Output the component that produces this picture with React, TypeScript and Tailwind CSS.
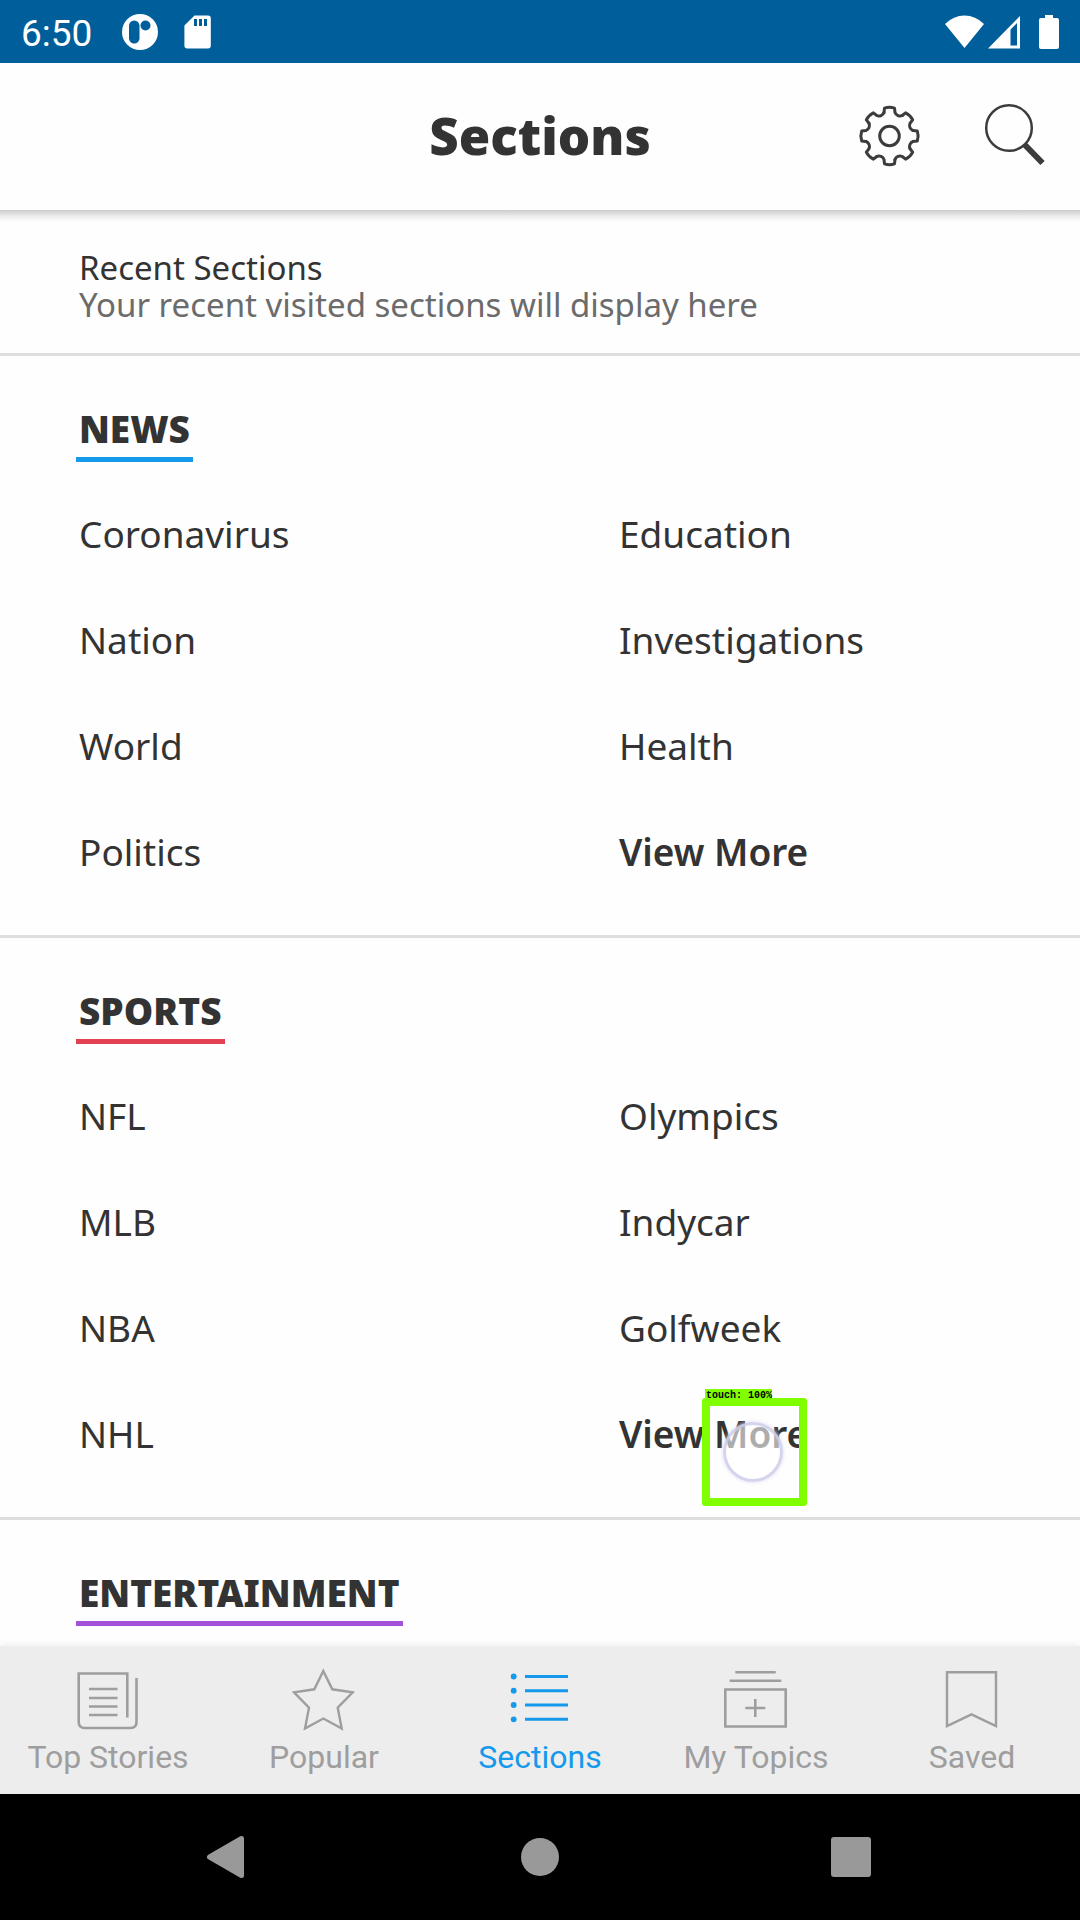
import type { ReactNode } from "react";

type Section = {
  title: string;
  underline: string;
  left: string[];
  right: string[];
  touched?: boolean;
};

const sections: Section[] = [
  {
    title: "NEWS",
    underline: "border-[#1499eb]",
    left: ["Coronavirus", "Nation", "World", "Politics"],
    right: ["Education", "Investigations", "Health", "View More"],
  },
  {
    title: "SPORTS",
    underline: "border-[#e34152]",
    left: ["NFL", "MLB", "NBA", "NHL"],
    right: ["Olympics", "Indycar", "Golfweek", "View More"],
    touched: true,
  },
  { title: "ENTERTAINMENT", underline: "border-[#a352d8]", left: [], right: [] },
];

function StatusBar() {
  return (
    <div className="flex h-[63px] shrink-0 items-center bg-[#005e9b] px-[21px] text-white">
      <span className="pt-1 font-[Roboto,sans-serif] text-[37px] leading-[56px]">6:50</span>
      <svg className="ml-[30px] size-9" viewBox="0 0 36 36" aria-hidden="true">
        <circle cx="18" cy="18" r="18" fill="white" />
        <rect x="7" y="6.5" width="10.5" height="23" rx="5.2" fill="#005e9b" />
        <circle cx="23.5" cy="11.5" r="5" fill="#005e9b" />
      </svg>
      <svg className="ml-[26px] h-[34px] w-[27px]" viewBox="0 0 27 34" aria-hidden="true">
        <path
          d="M10.5 .5H24Q26.8.5 26.8 3.3V30.5Q26.8 33.5 24 33.5H3.3Q.4 33.5.4 30.5V10.5Z"
          fill="white"
        />
        <path d="M10 4h3v7h-3zM15 4h3v7h-3zM20 4h3v7h-3z" fill="#005e9b" />
      </svg>
      <svg className="ml-auto h-[34px] w-[39px]" viewBox="0 0 39 34" aria-hidden="true">
        <path d="M0 9Q8.500.5 19.500.5T39 9L19.500 33Z" fill="white" />
      </svg>
      <svg className="ml-1 h-[34px] w-8" viewBox="0 0 32 34" aria-hidden="true">
        <path d="M0 33.500 32 1V33.500ZM22.500 14.500V30.500H29V8Z" fill="white" fillRule="evenodd" />
      </svg>
      <svg className="ml-[19px] h-[34px] w-5" viewBox="0 0 20 34" aria-hidden="true">
        <path
          d="M6 0H14V3H18Q20 3 20 5V32Q20 34 18 34H2Q0 34 0 32V5Q0 3 2 3H6Z"
          fill="white"
        />
      </svg>
    </div>
  );
}

const gearAngles = [0, 45, 90, 135, 180, 225, 270, 315];

function Header() {
  return (
    <header className="relative z-10 grid h-[147px] shrink-0 grid-cols-[1fr_auto_1fr] items-center bg-[#fefefe]">
      <h1 className="col-start-2 pb-1 text-[51px] leading-[64px] font-black">Sections</h1>
      <div className="flex items-center justify-end gap-[60px] pr-[34px]">
        <button type="button" aria-label="Settings">
          <svg
            className="size-16"
            viewBox="0 0 64 64"
            fill="none"
            stroke="#3c3c3c"
            strokeWidth="3"
            strokeLinejoin="round"
            strokeLinecap="round"
            aria-hidden="true"
          >
            <g transform="translate(31.5 31)">
              {gearAngles.map((a) => (
                <path
                  key={a}
                  transform={`rotate(${a})`}
                  d="M-5.500-23.500-5-27.800Q0-29.500 5-27.800L5.500-23.500A5.300 5.300 0 0 0 12.730-20.510"
                />
              ))}
              <circle r="9.800" />
            </g>
          </svg>
        </button>
        <button type="button" aria-label="Search">
          <svg
            className="size-16 overflow-visible"
            viewBox="0 0 64 64"
            fill="none"
            stroke="#3c3c3c"
            aria-hidden="true"
          >
            <circle cx="27" cy="23" r="22.800" strokeWidth="2.500" />
            <path d="M42.500 39.500 60.500 58" strokeWidth="6" />
          </svg>
        </button>
      </div>
      <div className="absolute inset-x-0 top-full h-3 bg-linear-to-b from-[#cccccc] via-[#ececec] to-[#fefefe]" />
    </header>
  );
}

function TouchMarker() {
  return (
    <div className="pointer-events-none absolute top-2 left-[162px]">
      <div className="ml-[3px] h-[9px] w-[67px] bg-[#80ff00] pl-px font-['Liberation_Mono',monospace] text-[10px] leading-[13px] font-bold whitespace-nowrap text-black">
        touch: 100%
      </div>
      <div className="relative -z-10 flex h-[108px] w-[105px] items-center justify-center rounded-[3px] border-8 border-[#80ff00]">
        <div className="mr-[3px] size-[60px] rounded-full border-3 border-[#c9c9e8]/80 bg-white/60 shadow-[0_0_4px_#dcdcf5]" />
      </div>
    </div>
  );
}

function LinkColumn({ items, touched }: { items: string[]; touched?: boolean }) {
  return (
    <ul>
      {items.map((item) => (
        <li key={item} className="relative isolate flex h-[106px] items-center pl-[79px]">
          <a href="#" className={item === "View More" ? "relative -z-20 font-semibold" : ""}>
            {item}
          </a>
          {touched && item === "View More" && <TouchMarker />}
        </li>
      ))}
    </ul>
  );
}

function SectionBlock({ section }: { section: Section }) {
  return (
    <section className="border-t-3 border-[#dedede] pt-[49px] pb-[30px] text-[37px]">
      <h2
        className={`mb-[19px] ml-[76px] w-fit border-b-5 px-[3px] pb-1 leading-[48px] font-black ${section.underline}`}
      >
        {section.title}
      </h2>
      <div className="grid grid-cols-2">
        <LinkColumn items={section.left} />
        <LinkColumn items={section.right} touched={section.touched} />
      </div>
    </section>
  );
}

function Tab({ label, active, children }: { label: string; active?: boolean; children: ReactNode }) {
  return (
    <button
      type="button"
      className={`flex flex-col items-center pt-[22px] ${active ? "text-[#1499eb]" : "text-[#9e9e9e]"}`}
    >
      <svg
        className="size-16"
        viewBox="0 0 64 64"
        fill="none"
        stroke="currentColor"
        strokeWidth="2.600"
        aria-hidden="true"
      >
        {children}
      </svg>
      <span className="font-[Roboto,sans-serif] text-[32px] leading-[50px] whitespace-nowrap">{label}</span>
    </button>
  );
}

function TabBar() {
  return (
    <nav className="relative z-10 grid h-[148px] shrink-0 grid-cols-5 bg-[#ededed] shadow-[0_-2px_6px_rgba(0,0,0,0.06)]">
      <Tab label="Top Stories">
        <path d="M51.300 49.500V5.500H2.700V54Q2.700 60 8.700 60H54.500Q60.500 60 60.500 54V10" />
        <path d="M13 21H41.500M13 30H41.500M13 38.500H41.500M13 47H41.500" />
      </Tab>
      <Tab label="Popular">
        <path
          d="M31.300 3 40.300 21.300 60.700 24.300 45.700 39.700 49.700 60.500 31.300 50.500 13 60.500 17 39.700 2 24.300 22.300 21.300Z"
          strokeWidth="2.400"
        />
      </Tab>
      <Tab label="Sections" active>
        <g fill="currentColor" stroke="none">
          <circle cx="5.700" cy="8.500" r="2.900" />
          <circle cx="5.700" cy="22.700" r="2.900" />
          <circle cx="5.700" cy="37" r="2.900" />
          <circle cx="5.700" cy="51.300" r="2.900" />
        </g>
        <path d="M17 8.500H60M17 22.700H60M17 37H60M17 51.300H60" strokeWidth="3" />
      </Tab>
      <Tab label="My Topics">
        <path d="M11.300 4.300H51.700M5.700 12.700H57.300M1.300 21.500H61.700V58.500H1.300Z" />
        <path d="M21.300 40H41.300M31.300 31V49" />
      </Tab>
      <Tab label="Saved">
        <path d="M7 4.300H56V58L31.500 46.300 7 58Z" strokeWidth="2.400" />
      </Tab>
    </nav>
  );
}

function SystemNav() {
  return (
    <div className="grid h-[126px] shrink-0 grid-cols-3 place-items-center bg-black px-[72px]">
      <button type="button" aria-label="Back">
        <svg className="size-16" viewBox="0 0 64 64" aria-hidden="true">
          <path
            d="M13.500 32 45.500 13.500V50.500Z"
            fill="#999999"
            stroke="#999999"
            strokeWidth="5"
            strokeLinejoin="round"
          />
        </svg>
      </button>
      <button type="button" aria-label="Home">
        <svg className="size-16" viewBox="0 0 64 64" aria-hidden="true">
          <circle cx="32" cy="32" r="19" fill="#999999" />
        </svg>
      </button>
      <button type="button" aria-label="Recent apps">
        <svg className="size-16" viewBox="0 0 64 64" aria-hidden="true">
          <rect x="11" y="12" width="40" height="40" rx="3" fill="#999999" />
        </svg>
      </button>
    </div>
  );
}

export default function App() {
  return (
    <div className="flex h-screen flex-col overflow-hidden bg-[#fefefe] font-['Noto_Sans',sans-serif] text-[#333333]">
      <StatusBar />
      <Header />
      <main className="min-h-0 flex-1 overflow-hidden">
        <div className="px-[79px] pt-[39px] pb-[30px] text-[33px] leading-[37px]">
          <h2>Recent Sections</h2>
          <p className="text-[#6b6b6b]">Your recent visited sections will display here</p>
        </div>
        {sections.map((s) => (
          <SectionBlock key={s.title} section={s} />
        ))}
      </main>
      <TabBar />
      <SystemNav />
    </div>
  );
}
